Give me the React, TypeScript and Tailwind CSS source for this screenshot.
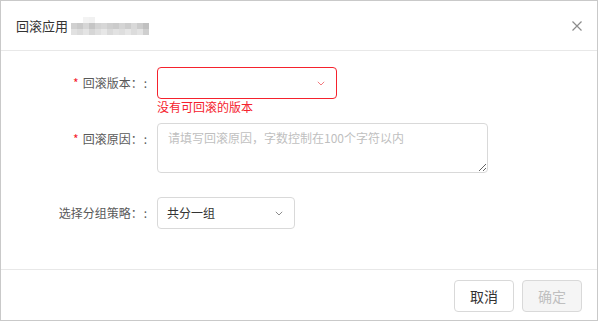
import React from "react";

const mosaic: string[][] = [
  ["bg-white", "bg-white", "bg-[#f3f3f3]", "bg-[#f1f1f1]", "bg-white", "bg-white", "bg-white", "bg-white", "bg-white", "bg-white", "bg-white", "bg-white", "bg-white", "bg-white"],
  ["bg-[#d0d0d0]", "bg-[#c9c9c9]", "bg-[#d6d6d6]", "bg-[#c5c5c5]", "bg-[#d3d3d3]", "bg-[#d7d7d7]", "bg-[#cfcfcf]", "bg-[#cbcbcb]", "bg-[#d5d5d5]", "bg-[#cdcdcd]", "bg-[#d9d9d9]", "bg-[#cccccc]", "bg-[#c0c0c0]", "bg-white"],
  ["bg-[#e1e1e1]", "bg-[#dbdbdb]", "bg-[#e4e4e4]", "bg-[#d6d6d6]", "bg-[#dfdfdf]", "bg-[#e7e7e7]", "bg-[#dadada]", "bg-[#e2e2e2]", "bg-[#dedede]", "bg-[#e6e6e6]", "bg-[#dcdcdc]", "bg-[#e3e3e3]", "bg-[#cfcfcf]", "bg-white"],
];

function Chevron({ className }: { className: string }) {
  return (
    <svg width="8" height="5" viewBox="0 0 8 5" className={className} fill="none">
      <path d="M0.8 0.8 L4 4 L7.2 0.8" stroke="currentColor" strokeWidth="1" />
    </svg>
  );
}

function Label({ text, required }: { text: string; required?: boolean }) {
  return (
    <div className="w-[146px] shrink-0 text-right text-[12px] leading-[32px] text-[#595959]">
      {required && <span className="mr-[4px] text-[#f5222d]">*</span>}
      {text}：<span className="ml-[1px]">:</span>
    </div>
  );
}

export default function App() {
  return (
    <div
      className="w-[598px] h-[321px] border border-[#c9c9c9] bg-white flex flex-col"
      style={{ fontFamily: '"Noto Sans CJK SC", "Noto Sans", sans-serif' }}
    >
      <div className="h-[50px] shrink-0 border-b border-[#e8e8e8] flex items-center justify-between pl-[15px] pr-[15px]">
        <div className="flex items-center">
          <span className="text-[13px] text-[#333333]">回滚应用</span>
          <div className="ml-[3px] flex flex-col">
            {mosaic.map((row, i) => (
              <div key={i} className="flex">
                {row.map((c, j) => (
                  <div key={j} className={`w-[6px] h-[6px] ${c}`} />
                ))}
              </div>
            ))}
          </div>
        </div>
        <svg width="10" height="10" viewBox="0 0 10 10" className="text-[#8c8c8c]">
          <path d="M0.5 0.5 L9.5 9.5 M9.5 0.5 L0.5 9.5" stroke="currentColor" strokeWidth="1.2" />
        </svg>
      </div>

      <div className="flex-1 pt-[16px]">
        <div className="flex">
          <Label text="回滚版本" required />
          <div className="ml-[10px]">
            <div className="w-[180px] h-[32px] rounded-[4px] border border-[#f5222d] flex items-center justify-end pr-[11px]">
              <Chevron className="text-[#f27a7f]" />
            </div>
            <div className="text-[12px] leading-[16px] text-[#f5222d]">没有可回滚的版本</div>
          </div>
        </div>

        <div className="flex mt-[8px]">
          <Label text="回滚原因" required />
          <textarea
            readOnly
            placeholder="请填写回滚原因，字数控制在100个字符以内"
            className="ml-[10px] w-[331px] h-[50px] rounded-[4px] border border-[#d9d9d9] px-[10px] pt-[4px] text-[12px] leading-[20px] text-[#333] placeholder:text-[#bfbfbf] outline-none resize-y"
          />
        </div>

        <div className="flex mt-[24px]">
          <Label text="选择分组策略" />
          <div className="ml-[10px] w-[138px] h-[32px] rounded-[4px] border border-[#d9d9d9] flex items-center justify-between pl-[9px] pr-[11px]">
            <span className="text-[12px] text-[#333333]">共分一组</span>
            <Chevron className="text-[#8c8c8c]" />
          </div>
        </div>
      </div>

      <div className="h-[51px] shrink-0 border-t border-[#e8e8e8] flex items-start justify-end gap-[8px] pt-[10px] pr-[15px]">
        <button className="w-[60px] h-[32px] rounded-[4px] border border-[#d9d9d9] bg-white text-[14px] text-[#333333]">
          取消
        </button>
        <button className="w-[60px] h-[32px] rounded-[4px] border border-[#d9d9d9] bg-[#f5f5f5] text-[14px] text-[#bfbfbf]">
          确定
        </button>
      </div>
    </div>
  );
}
